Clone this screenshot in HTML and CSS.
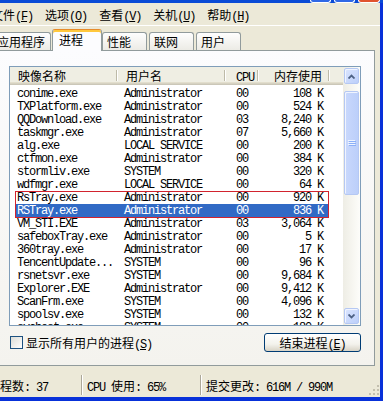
FILE: index.html
```html
<!DOCTYPE html>
<html lang="zh-CN">

<head>
    <meta charset="UTF-8">
    <meta name="viewport" content="width=device-width, initial-scale=1.0">
    <title>Windows 任务管理器</title>
    <link rel="stylesheet" href="styles.css">
</head>

<body>

    <div class="window">
        <div class="caption">
            <span class="cap-btn"></span>
            <span class="cap-btn"></span>
            <span class="cap-btn close"></span>
        </div>

        <div class="frame">
            <ul class="menubar">
                <li>文件<span class="mono">(<u>F</u>)</span></li>
                <li>选项<span class="mono">(<u>O</u>)</span></li>
                <li>查看<span class="mono">(<u>V</u>)</span></li>
                <li>关机<span class="mono">(<u>U</u>)</span></li>
                <li>帮助<span class="mono">(<u>H</u>)</span></li>
            </ul>

            <div class="tabs">
                <div class="tab">应用程序</div>
                <div class="tab active">进程</div>
                <div class="tab">性能</div>
                <div class="tab">联网</div>
                <div class="tab">用户</div>
            </div>

            <div class="panel">
                <div class="list">
                    <div class="list-main">
                        <div class="list-head">
                            <div class="hc c1">映像名称</div>
                            <div class="hc c2">用户名</div>
                            <div class="hc c3"><span class="mono">CPU</span></div>
                            <div class="hc c4">内存使用</div>
                        </div>

                        <div class="rows mono">
                            <div class="row"><span class="c1">conime.exe</span><span class="c2">Administrator</span><span class="c3">00</span><span class="c4">108 K</span></div>
                            <div class="row"><span class="c1">TXPlatform.exe</span><span class="c2">Administrator</span><span class="c3">00</span><span class="c4">524 K</span></div>
                            <div class="row"><span class="c1">QQDownload.exe</span><span class="c2">Administrator</span><span class="c3">03</span><span class="c4">8,240 K</span></div>
                            <div class="row"><span class="c1">taskmgr.exe</span><span class="c2">Administrator</span><span class="c3">07</span><span class="c4">5,660 K</span></div>
                            <div class="row"><span class="c1">alg.exe</span><span class="c2">LOCAL SERVICE</span><span class="c3">00</span><span class="c4">200 K</span></div>
                            <div class="row"><span class="c1">ctfmon.exe</span><span class="c2">Administrator</span><span class="c3">00</span><span class="c4">384 K</span></div>
                            <div class="row"><span class="c1">stormliv.exe</span><span class="c2">SYSTEM</span><span class="c3">00</span><span class="c4">320 K</span></div>
                            <div class="row"><span class="c1">wdfmgr.exe</span><span class="c2">LOCAL SERVICE</span><span class="c3">00</span><span class="c4">64 K</span></div>
                            <div class="row"><span class="c1">RsTray.exe</span><span class="c2">Administrator</span><span class="c3">00</span><span class="c4">920 K</span></div>
                            <div class="row sel"><span class="c1">RSTray.exe</span><span class="c2">Administrator</span><span class="c3">00</span><span class="c4">836 K</span></div>
                            <div class="row"><span class="c1">VM_STI.EXE</span><span class="c2">Administrator</span><span class="c3">03</span><span class="c4">3,064 K</span></div>
                            <div class="row"><span class="c1">safeboxTray.exe</span><span class="c2">Administrator</span><span class="c3">00</span><span class="c4">5 K</span></div>
                            <div class="row"><span class="c1">360tray.exe</span><span class="c2">Administrator</span><span class="c3">00</span><span class="c4">17 K</span></div>
                            <div class="row"><span class="c1">TencentUpdate...</span><span class="c2">SYSTEM</span><span class="c3">00</span><span class="c4">96 K</span></div>
                            <div class="row"><span class="c1">rsnetsvr.exe</span><span class="c2">SYSTEM</span><span class="c3">00</span><span class="c4">9,684 K</span></div>
                            <div class="row"><span class="c1">Explorer.EXE</span><span class="c2">Administrator</span><span class="c3">00</span><span class="c4">9,412 K</span></div>
                            <div class="row"><span class="c1">ScanFrm.exe</span><span class="c2">SYSTEM</span><span class="c3">00</span><span class="c4">4,096 K</span></div>
                            <div class="row"><span class="c1">spoolsv.exe</span><span class="c2">SYSTEM</span><span class="c3">00</span><span class="c4">132 K</span></div>
                            <div class="row"><span class="c1">svchost.exe</span><span class="c2">SYSTEM</span><span class="c3">00</span><span class="c4">180 K</span></div>
                        </div>

                        <!-- red box drawn over the two RsTray rows -->
                        <div class="mark"></div>
                    </div>

                    <div class="scrollbar">
                        <div class="sb-btn">
                            <svg width="7" height="5" viewBox="0 0 7 5"><polyline points="0.5,4.5 3.5,1.5 6.5,4.5" fill="none" stroke="#4d6185" stroke-width="1.8"/></svg>
                        </div>
                        <div class="sb-thumb">
                            <svg width="8" height="7" viewBox="0 0 8 7">
                                <rect x="0" y="0" width="7" height="1" fill="#eef4ff"/>
                                <rect x="1" y="1" width="7" height="1" fill="#8cb0f8"/>
                                <rect x="0" y="2" width="7" height="1" fill="#eef4ff"/>
                                <rect x="1" y="3" width="7" height="1" fill="#8cb0f8"/>
                                <rect x="0" y="4" width="7" height="1" fill="#eef4ff"/>
                                <rect x="1" y="5" width="7" height="1" fill="#8cb0f8"/>
                            </svg>
                        </div>
                        <div class="sb-track"></div>
                        <div class="sb-btn">
                            <svg width="7" height="5" viewBox="0 0 7 5"><polyline points="0.5,0.5 3.5,3.5 6.5,0.5" fill="none" stroke="#4d6185" stroke-width="1.8"/></svg>
                        </div>
                    </div>
                </div>

                <div class="foot">
                    <label class="check">
                        <span class="box"></span>
                        <span>显示所有用户的进程<span class="mono">(<u>S</u>)</span></span>
                    </label>
                    <button class="btn" type="button">结束进程<span class="mono">(<u>E</u>)</span></button>
                </div>
            </div>

            <div class="status">
                <div class="pane p1">进程数<span class="mono">: 37</span></div>
                <div class="pane p2"><span class="mono">CPU </span>使用<span class="mono">: 65%</span></div>
                <div class="pane p3">提交更改<span class="mono">: 616M / 990M</span></div>
                <svg class="grip" width="12" height="12" viewBox="0 0 12 12">
                    <rect x="9" y="1" width="2" height="2" fill="#c3bfae"/>
                    <rect x="5" y="5" width="2" height="2" fill="#c3bfae"/>
                    <rect x="9" y="5" width="2" height="2" fill="#c3bfae"/>
                    <rect x="1" y="9" width="2" height="2" fill="#c3bfae"/>
                    <rect x="5" y="9" width="2" height="2" fill="#c3bfae"/>
                    <rect x="9" y="9" width="2" height="2" fill="#c3bfae"/>
                </svg>
            </div>
        </div>
    </div>

</body>

</html>
```

FILE: styles.css
```css
* {
    box-sizing: border-box;
}

body {
    margin: 0;
    width: 383px;
    height: 401px;
    overflow: hidden;
    background-color: #ece9d8;
    font-family: "Noto Sans CJK SC", sans-serif;
    font-size: 12px;
    color: #000;
}

.mono {
    font-family: "Liberation Mono", monospace;
    font-size: 12px;
    letter-spacing: -1.2px;
}

.window {
    width: 383px;
    height: 401px;
    display: flex;
    flex-direction: column;
    overflow: hidden;
}

/* bottom edge of the blue title bar */
.caption {
    height: 3px;
    flex: none;
    background-color: #0a4bd6;
    display: flex;
    justify-content: flex-end;
    gap: 3px;
    padding-right: 3px;
}

.cap-btn {
    width: 21px;
    height: 3px;
    border: 1px solid #fff;
    border-top: none;
    border-radius: 0 0 3px 3px;
    background-color: #2f68e6;
}

.cap-btn.close {
    width: 22px;
    background-color: #e0532f;
}

.frame {
    flex: 1;
    display: flex;
    flex-direction: column;
    border-right: 3px solid #0831d9;
    border-bottom: 4px solid #0831d9;
}

.menubar {
    display: flex;
    flex: none;
    height: 23px;
    margin: 0 0 0 -15px;
    padding: 1px 0 0;
    list-style: none;
    line-height: 21px;
    border-bottom: 1px solid #fff;
}

.menubar li {
    padding: 0 6px;
    white-space: nowrap;
}

.tabs {
    display: flex;
    flex: none;
    align-items: flex-end;
    height: 24px;
    margin-left: -8px;
    position: relative;
    z-index: 1;
}

.tab {
    height: 18px;
    min-width: 45px;
    padding: 0 5px 0 4px;
    margin-right: 2px;
    line-height: 17px;
    white-space: nowrap;
    border: 1px solid #919b9c;
    border-bottom: none;
    border-radius: 3px 3px 0 0;
    background: linear-gradient(#fefefe, #ecebe5);
}

.tab:first-child {
    margin-right: 1px;
}

.tab.active {
    height: 22px;
    min-width: 50px;
    padding: 2px 5px 3px 6px;
    margin-right: 0;
    margin-bottom: -1px;
    line-height: 16px;
    border-top-color: #e68b2c;
    background: #fcfcfe;
    box-shadow: inset 0 2px 0 #ffc83c;
}

.panel {
    flex: none;
    width: 385px;
    height: 316px;
    margin-left: -10px;
    border: 1px solid #919b9c;
    background: linear-gradient(#fcfcfe, #f4f3ee);
}

.list {
    display: flex;
    width: 352px;
    height: 260px;
    margin: 15px 0 0 18px;
    border: 1px solid #7f9db9;
    background-color: #fff;
}

.list-main {
    width: 333px;
    position: relative;
    overflow: hidden;
}

.list-head {
    display: flex;
    height: 18px;
    background-color: #efeee3;
    box-shadow: inset 0 -1px 0 #cbc7b8, inset 0 -2px 0 #d6d2c2, inset 0 -3px 0 #e2decd;
}

.hc {
    position: relative;
    line-height: 17px;
    white-space: nowrap;
}

.hc::after {
    content: "";
    position: absolute;
    right: 0;
    top: 3px;
    bottom: 4px;
    width: 1px;
    background-color: #bdbaa8;
    box-shadow: 1px 0 0 #fff;
}

.list-head .c1 {
    width: 107px;
    padding-left: 8px;
}

.list-head .c2 {
    width: 108px;
    padding-left: 9px;
}

.list-head .c3 {
    width: 33px;
    padding-left: 11px;
}

.list-head .c4 {
    width: 71px;
    padding-right: 7px;
    text-align: right;
}

.rows {
    padding-top: 2px;
}

.row {
    display: flex;
    width: 314px;
    height: 13px;
    margin-left: 5px;
    line-height: 15px;
    white-space: nowrap;
}

.row .c1 {
    width: 102px;
    padding-left: 2px;
}

.row .c2 {
    width: 108px;
    padding-left: 7px;
}

.row .c3 {
    width: 33px;
    padding-left: 11px;
}

.row .c4 {
    width: 71px;
    padding-right: 6px;
    text-align: right;
}

.row.sel {
    background-color: #316ac5;
    color: #fff;
}

.mark {
    position: absolute;
    left: 5px;
    top: 124px;
    width: 314px;
    height: 27px;
    border: 1px solid #d2232e;
}

.scrollbar {
    width: 17px;
    display: flex;
    flex-direction: column;
    padding: 1px 0;
    background: linear-gradient(90deg, #eeede5, #fdfdfa);
}

.sb-btn,
.sb-thumb {
    margin: 0 1px;
    border: 1px solid #b5c8f3;
    border-radius: 2px;
    background: linear-gradient(135deg, #dbe5fe, #bccffa);
    box-shadow: inset 1px 1px 0 #f0f4ff;
    display: flex;
    align-items: center;
    justify-content: center;
}

.sb-btn {
    height: 16px;
}

.sb-thumb {
    height: 104px;
    margin-top: 7px;
    background: linear-gradient(90deg, #c9d8fc, #bccffa);
}

.sb-track {
    flex: 1;
}

.foot {
    display: flex;
    align-items: center;
    justify-content: space-between;
    height: 19px;
    margin-top: 7px;
    padding: 0 13px 0 19px;
}

.check {
    display: flex;
    align-items: center;
    gap: 3px;
    white-space: nowrap;
}

.box {
    width: 13px;
    height: 13px;
    border: 1px solid #1c5180;
    background: linear-gradient(135deg, #dcdcd6, #fff);
}

.btn {
    width: 97px;
    height: 19px;
    padding: 0;
    border: 1px solid #003c74;
    border-radius: 3px;
    background: linear-gradient(#fff, #f3f2ec 60%, #d8d3c6);
    font-family: inherit;
    font-size: 12px;
    line-height: 17px;
    color: #000;
}

.status {
    display: flex;
    flex: none;
    align-items: center;
    height: 24px;
    margin: 7px 0 0 -15px;
}

.pane {
    height: 20px;
    line-height: 21px;
    white-space: nowrap;
}

.p1 {
    width: 97px;
    padding-left: 3px;
    border-right: 1px solid #aca899;
}

.p2 {
    width: 119px;
    padding-left: 4px;
    border-left: 1px solid #fff;
    border-right: 1px solid #aca899;
}

.p3 {
    flex: 1;
    padding-left: 4px;
    border-left: 1px solid #fff;
}

.grip {
    align-self: flex-end;
    margin-bottom: 1px;
}
```
